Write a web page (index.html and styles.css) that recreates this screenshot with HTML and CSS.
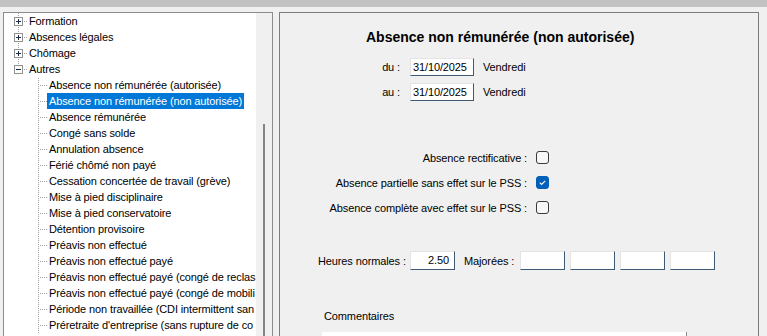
FILE: index.html
```html
<!DOCTYPE html>
<html lang="fr">
<head>
    <meta charset="UTF-8">
    <meta name="viewport" content="width=device-width, initial-scale=1.0">
    <title>Absences</title>
    <link rel="stylesheet" href="styles.css">
</head>
<body>
    <div class="topbar"></div>

    <div class="main">
        <div class="tree-panel">
            <div class="tree">
                <div class="branch">
                    <div class="node node-top">
                        <svg class="toggle" width="9" height="9" viewBox="0 0 9 9"><rect x="0.5" y="0.5" width="8" height="8" fill="#fff" stroke="#919191"/><path d="M2 4.5H7M4.5 2V7" stroke="#1e2a44"/></svg>
                        <span class="label">Formation</span>
                    </div>
                    <div class="node node-top">
                        <svg class="toggle" width="9" height="9" viewBox="0 0 9 9"><rect x="0.5" y="0.5" width="8" height="8" fill="#fff" stroke="#919191"/><path d="M2 4.5H7M4.5 2V7" stroke="#1e2a44"/></svg>
                        <span class="label">Absences légales</span>
                    </div>
                    <div class="node node-top">
                        <svg class="toggle" width="9" height="9" viewBox="0 0 9 9"><rect x="0.5" y="0.5" width="8" height="8" fill="#fff" stroke="#919191"/><path d="M2 4.5H7M4.5 2V7" stroke="#1e2a44"/></svg>
                        <span class="label">Chômage</span>
                    </div>
                    <div class="node node-top">
                        <svg class="toggle" width="9" height="9" viewBox="0 0 9 9"><rect x="0.5" y="0.5" width="8" height="8" fill="#fff" stroke="#919191"/><path d="M2 4.5H7" stroke="#1e2a44"/></svg>
                        <span class="label">Autres</span>
                    </div>
                </div>

                <div class="children">
                    <div class="node node-child"><span class="label">Absence non rémunérée (autorisée)</span></div>
                    <div class="node node-child"><span class="label selected">Absence non rémunérée (non autorisée)</span></div>
                    <div class="node node-child"><span class="label">Absence rémunérée</span></div>
                    <div class="node node-child"><span class="label">Congé sans solde</span></div>
                    <div class="node node-child"><span class="label">Annulation absence</span></div>
                    <div class="node node-child"><span class="label">Férié chômé non payé</span></div>
                    <div class="node node-child"><span class="label">Cessation concertée de travail (grève)</span></div>
                    <div class="node node-child"><span class="label">Mise à pied disciplinaire</span></div>
                    <div class="node node-child"><span class="label">Mise à pied conservatoire</span></div>
                    <div class="node node-child"><span class="label">Détention provisoire</span></div>
                    <div class="node node-child"><span class="label">Préavis non effectué</span></div>
                    <div class="node node-child"><span class="label">Préavis non effectué payé</span></div>
                    <div class="node node-child"><span class="label">Préavis non effectué payé (congé de reclas</span></div>
                    <div class="node node-child"><span class="label">Préavis non effectué payé (congé de mobili</span></div>
                    <div class="node node-child"><span class="label">Période non travaillée (CDI intermittent san</span></div>
                    <div class="node node-child"><span class="label">Préretraite d'entreprise (sans rupture de co</span></div>
                </div>
            </div>
            <div class="scrollbar"><div class="thumb"></div></div>
        </div>

        <div class="detail">
            <h2 class="detail-title">Absence non rémunérée (non autorisée)</h2>

            <div class="dates">
                <span class="field-label">du :</span>
                <div class="input">31/10/2025</div>
                <span class="day">Vendredi</span>

                <span class="field-label">au :</span>
                <div class="input">31/10/2025</div>
                <span class="day">Vendredi</span>
            </div>

            <div class="checks">
                <span class="field-label">Absence rectificative :</span>
                <span class="checkbox"></span>

                <span class="field-label">Absence partielle sans effet sur le PSS :</span>
                <span class="checkbox checked">
                    <svg width="11" height="11" viewBox="0 0 11 11"><path d="M2.8 5.6L4.6 7.4L8.2 3.8" fill="none" stroke="#fff" stroke-width="1.1"/></svg>
                </span>

                <span class="field-label">Absence complète avec effet sur le PSS :</span>
                <span class="checkbox"></span>
            </div>

            <div class="hours">
                <span class="hours-label">Heures normales :</span>
                <div class="input input-num">2.50</div>
                <span class="extra-label">Majorées :</span>
                <div class="input input-num"></div>
                <div class="input input-num"></div>
                <div class="input input-num"></div>
                <div class="input input-num"></div>
            </div>

            <div class="comments-label">Commentaires</div>
            <div class="comments"></div>
        </div>
    </div>
</body>
</html>
```

FILE: styles.css
```css
* {
    margin: 0;
    padding: 0;
    box-sizing: border-box;
}

body {
    font-family: 'Liberation Sans', Arial, sans-serif;
    font-size: 11px;
    letter-spacing: -0.12px;
    color: #000;
    background: #f0f0f0;
    overflow: hidden;
    height: 336px;
}

.topbar {
    height: 7px;
    background: #c2c2c2;
}

.main {
    display: flex;
    gap: 6px;
    padding: 5px 0 0 3px;
}

/* arbre de gauche */
.tree-panel {
    display: flex;
    width: 270px;
    height: 340px;
    background: #fff;
    border: 1px solid #8c8c8c;
    overflow: hidden;
}

.tree {
    flex: 1;
    overflow: hidden;
}

.branch {
    background: repeating-linear-gradient(to bottom, #a0a0a0 0 1px, transparent 1px 2px) no-repeat;
    background-position: 14px 0;
    background-size: 1px calc(100% - 8px);
}

.children {
    background: repeating-linear-gradient(to bottom, #a0a0a0 0 1px, transparent 1px 2px) no-repeat;
    background-position: 34px 1px;
    background-size: 1px 100%;
}

.node {
    display: flex;
    align-items: center;
    height: 16px;
    white-space: nowrap;
}

.node-top {
    padding-left: 10px;
    background: repeating-linear-gradient(to right, #a0a0a0 0 1px, transparent 1px 2px) no-repeat;
    background-position: 20px 8px;
    background-size: 4px 1px;
}

.node-child {
    padding-left: 43px;
    background: repeating-linear-gradient(to right, #a0a0a0 0 1px, transparent 1px 2px) no-repeat;
    background-position: 36px 8px;
    background-size: 7px 1px;
}

.toggle {
    display: block;
    flex-shrink: 0;
}

.node-top .label {
    margin-left: 4px;
}

.label {
    line-height: 16px;
    padding: 0 2px;
}

.label.selected {
    background: #0078d7;
    color: #fff;
}

.scrollbar {
    width: 16px;
    background: #f0f0f0;
    padding: 111px 0 0 7px;
}

.thumb {
    width: 2px;
    height: 100%;
    background: #858585;
}

/* panneau de droite */
.detail {
    width: 480px;
    height: 340px;
    border: 1px solid #7c7c7c;
    padding-top: 15px;
    overflow: hidden;
}

.detail-title {
    font-size: 14px;
    font-weight: bold;
    line-height: 18px;
    letter-spacing: 0;
    margin-left: 86px;
}

.input {
    background: #fff;
    border-top: 1px solid #e4e4e4;
    border-left: 1px solid #e4e4e4;
    border-right: 1px solid #3f5a76;
    border-bottom: 1px solid #3f5a76;
    line-height: 16px;
    white-space: nowrap;
}

.dates {
    display: grid;
    grid-template-columns: 120px 64px auto;
    grid-auto-rows: 18px;
    row-gap: 7px;
    column-gap: 10px;
    align-items: center;
    margin-top: 12px;
}

.dates .input {
    height: 18px;
    padding-left: 2px;
}

.field-label {
    text-align: right;
    white-space: nowrap;
}

.day {
    margin-left: -1px;
}

.checks {
    display: grid;
    grid-template-columns: 247px 13px;
    grid-auto-rows: 25px;
    column-gap: 9px;
    align-items: center;
    margin-top: 44px;
}

.checkbox {
    display: flex;
    align-items: center;
    justify-content: center;
    width: 13px;
    height: 13px;
    border: 1px solid #3a3a3a;
    border-radius: 3px;
    background: #f7f7f7;
}

.checkbox.checked {
    background: #005fb8;
    border-color: #005fb8;
}

.hours {
    display: flex;
    align-items: center;
    gap: 5px;
    margin: 31px 0 0 38px;
}

.hours-label {
    width: 87px;
    white-space: nowrap;
}

.extra-label {
    width: 51px;
    margin-left: 4px;
    white-space: nowrap;
}

.input-num {
    width: 45px;
    height: 19px;
    text-align: right;
    padding-right: 5px;
}

.comments-label {
    line-height: 14px;
    margin: 39px 0 0 44px;
}

.comments {
    width: 365px;
    height: 60px;
    margin: 9px 0 0 42px;
    background: #fff;
    border-right: 1px solid #8a8a8a;
}
```
